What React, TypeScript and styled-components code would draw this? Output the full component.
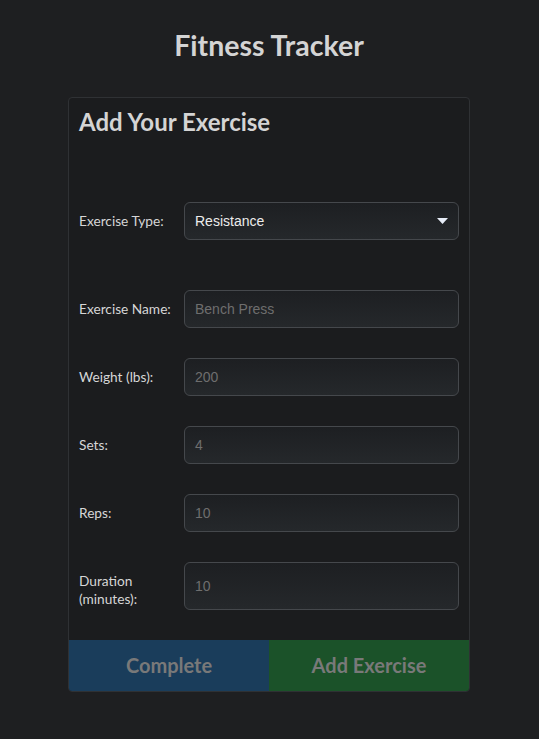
import React from "react";
import styled, { createGlobalStyle } from "styled-components";

const Global = createGlobalStyle`
  html, body { margin: 0; padding: 0; background: #1e1f21; }
  body { font-family: Lato, "Open Sans", sans-serif; color: #d6d6d6; }
  * { box-sizing: border-box; }
`;

const Page = styled.div`
  min-height: 739px;
  padding: 28px 1px 40px 0;
  background: #1e1f21;
`;

const Title = styled.h1`
  margin: 0 0 35px;
  text-align: center;
  font-family: Lato, sans-serif;
  font-weight: 700;
  font-size: 28.5px;
  line-height: 1.2;
  color: #d4d4d4;
`;

const Card = styled.div`
  width: 402px;
  margin: 0 auto;
  background: #1b1c1e;
  border: 1px solid #2f3134;
  border-radius: 4px;
  overflow: hidden;
`;

const CardBody = styled.div`
  padding: 10px 10px 30px;
`;

const CardTitle = styled.h2`
  margin: 0 0 65px;
  font-family: Lato, sans-serif;
  font-weight: 700;
  font-size: 24px;
  line-height: 1.2;
  color: #d4d4d4;
`;

const Form = styled.div`
  display: flex;
  flex-direction: column;
  gap: 30px;
`;

const Row = styled.div<{ $spaced?: boolean }>`
  display: grid;
  grid-template-columns: 105px 1fr;
  align-items: center;
  margin-bottom: ${(p) => (p.$spaced ? "20px" : "0")};
`;

const Label = styled.label<{ $shift?: boolean }>`
  font-family: Lato, sans-serif;
  font-size: 13.7px;
  line-height: 18.3px;
  color: #d6d6d6;
  margin-top: ${(p) => (p.$shift ? "9px" : "0")};
`;

const Field = styled.div<{ $tall?: boolean }>`
  position: relative;
  height: ${(p) => (p.$tall ? "48px" : "38px")};
  display: flex;
  align-items: center;
  padding: 0 10px;
  border: 1px solid #45484c;
  border-radius: 6px;
  background: linear-gradient(180deg, #1d1f22 0%, #25282b 100%);
  font-family: "Liberation Sans", Arial, sans-serif;
  font-size: 14px;
`;

const Value = styled.span`
  color: #ececec;
`;

const Placeholder = styled.span`
  color: #6e6e6e;
`;

const Caret = styled.svg`
  position: absolute;
  right: 10px;
  top: 50%;
  margin-top: -3px;
`;

const Actions = styled.div`
  display: grid;
  grid-template-columns: 1fr 1fr;
`;

const ActionButton = styled.button<{ $tone: "blue" | "green" }>`
  height: 51px;
  border: none;
  margin: 0;
  padding: 0;
  background: ${(p) => (p.$tone === "blue" ? "#1a3d5b" : "#1b5229")};
  font-family: Lato, sans-serif;
  font-weight: 700;
  font-size: 20px;
  color: #797979;
`;

const fields: { label: React.ReactNode; placeholder: string; tall?: boolean }[] = [
  { label: "Exercise Name:", placeholder: "Bench Press" },
  { label: "Weight (lbs):", placeholder: "200" },
  { label: "Sets:", placeholder: "4" },
  { label: "Reps:", placeholder: "10" },
  { label: <>Duration<br />(minutes):</>, placeholder: "10", tall: true },
];

export default function App() {
  return (
    <Page>
      <Global />
      <Title>Fitness Tracker</Title>
      <Card>
        <CardBody>
          <CardTitle>Add Your Exercise</CardTitle>
          <Form>
            <Row $spaced>
              <Label>Exercise Type:</Label>
              <Field>
                <Value>Resistance</Value>
                <Caret width="11" height="6" viewBox="0 0 11 6">
                  <path d="M0 0 H11 L5.5 6 Z" fill="#e6ecf7" />
                </Caret>
              </Field>
            </Row>
            {fields.map((f, i) => (
              <Row key={i}>
                <Label $shift={f.tall}>{f.label}</Label>
                <Field $tall={f.tall}>
                  <Placeholder>{f.placeholder}</Placeholder>
                </Field>
              </Row>
            ))}
          </Form>
        </CardBody>
        <Actions>
          <ActionButton $tone="blue">Complete</ActionButton>
          <ActionButton $tone="green">Add Exercise</ActionButton>
        </Actions>
      </Card>
    </Page>
  );
}
